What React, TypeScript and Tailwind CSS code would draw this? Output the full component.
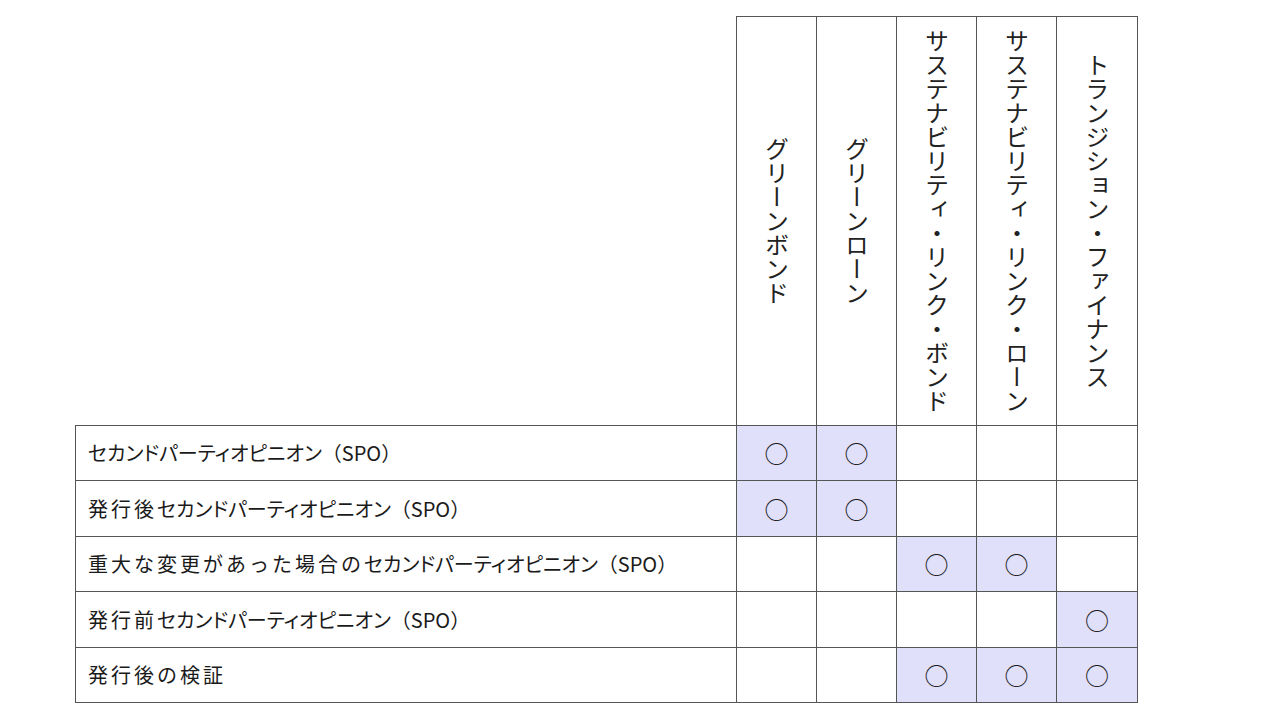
const columns = [
  "グリーンボンド",
  "グリーンローン",
  "サステナビリティ・リンク・ボンド",
  "サステナビリティ・リンク・ローン",
  "トランジション・ファイナンス",
];

const SPO = "セカンドパーティオピニオン";

const rows: { label: string; marks: boolean[]; height: string }[] = [
  { label: "セカンドパーティオピニオン（SPO）", marks: [true, true, false, false, false], height: "h-[55px]" },
  { label: "発行後セカンドパーティオピニオン（SPO）", marks: [true, true, false, false, false], height: "h-[56px]" },
  { label: "重大な変更があった場合のセカンドパーティオピニオン（SPO）", marks: [false, false, true, true, false], height: "h-[55px]" },
  { label: "発行前セカンドパーティオピニオン（SPO）", marks: [false, false, false, false, true], height: "h-[56px]" },
  { label: "発行後の検証", marks: [false, false, true, true, true], height: "h-[55px]" },
];

const colWidths = ["w-[661px]", "w-[80px]", "w-[80px]", "w-[80px]", "w-[80px]", "w-[81px]"];

// kanji prefix gets a bit of tracking, the katakana run is set proportionally
function Label({ text }: { text: string }) {
  const i = text.indexOf(SPO);
  if (i < 0) return <span className="tracking-[3px]">{text}</span>;
  const prefix = text.slice(0, i);
  const tail = text.slice(i + SPO.length);
  return (
    <>
      {prefix && <span className="tracking-[3px]">{prefix}</span>}
      <span className="[font-feature-settings:'palt']">{SPO}</span>
      <span>{tail}</span>
    </>
  );
}

export default function App() {
  return (
    <div
      className="w-[1280px] h-[720px] bg-white text-[#1a1a1a] overflow-hidden pt-4 pl-[75px]"
      style={{ fontFamily: '"Noto Sans CJK JP", "Noto Sans", sans-serif' }}
    >
      <table className="border-collapse table-fixed w-[1062px]">
        <colgroup>
          {colWidths.map((w, i) => (
            <col key={i} className={w} />
          ))}
        </colgroup>
        <thead>
          <tr className="h-[409px]">
            <th className="p-0" />
            {columns.map((c) => (
              <th key={c} className="border border-[#555] p-0 align-middle font-normal">
                <div className="flex items-center justify-center h-full">
                  <span className="text-[24px] leading-[24px] text-[#222] [writing-mode:vertical-rl]">{c}</span>
                </div>
              </th>
            ))}
          </tr>
        </thead>
        <tbody>
          {rows.map((r) => (
            <tr key={r.label} className={r.height}>
              <td className="border border-[#555] pl-3 text-[20px] leading-none whitespace-nowrap">
                <Label text={r.label} />
              </td>
              {r.marks.map((m, i) => (
                <td
                  key={i}
                  className={`border border-[#555] text-center text-[24px] leading-none ${m ? "bg-[#e0e0fa]" : ""}`}
                >
                  {m ? "○" : ""}
                </td>
              ))}
            </tr>
          ))}
        </tbody>
      </table>
    </div>
  );
}
